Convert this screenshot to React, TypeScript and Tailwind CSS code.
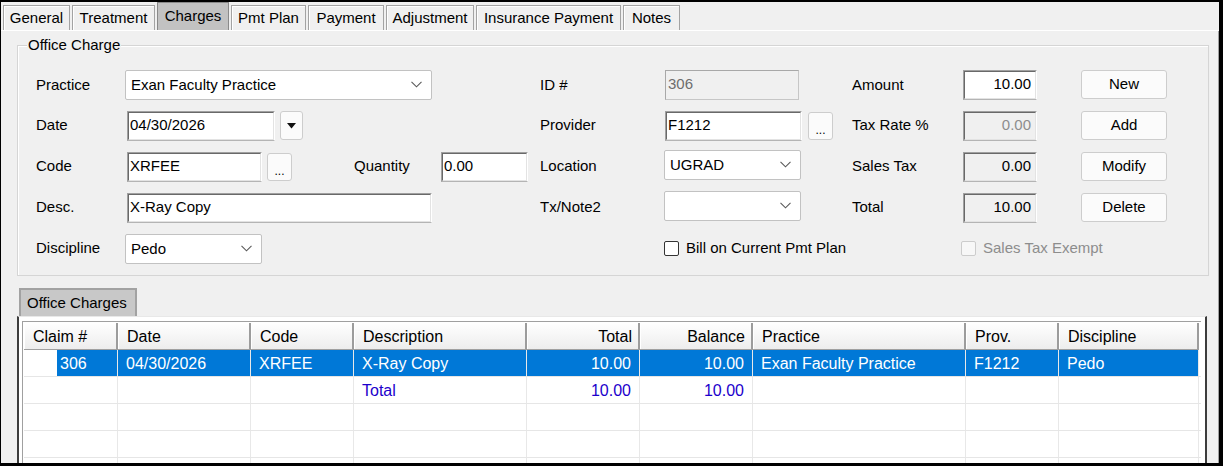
import React from "react";

function Chevron() {
  return (
    <svg width="11" height="7" viewBox="0 0 11 7" className="shrink-0">
      <polyline points="0.5,0.8 5.5,5.8 10.5,0.8" fill="none" stroke="#5a5a5a" strokeWidth="1.1" />
    </svg>
  );
}

function Combo({ w, text }: { w: string; text: string }) {
  return (
    <div className={`${w} h-[30px] bg-white border border-[#c2c2c2] rounded-[2px] flex items-center justify-between pl-[5px] pr-[9px]`}>
      <span className="text-[15px] text-black leading-none">{text}</span>
      <Chevron />
    </div>
  );
}

function Sunken({
  w,
  bg,
  right,
  gray,
  text,
}: {
  w: string;
  bg?: boolean;
  right?: boolean;
  gray?: boolean;
  text: string;
}) {
  return (
    <div className={`${w} h-[30px] border border-t-[#a0a0a0] border-l-[#a0a0a0] border-r-white border-b-[#b4b4b4]`}>
      <div
        className={`h-full w-full border border-t-[#696969] border-l-[#696969] border-r-[#e3e3e3] border-b-[#e3e3e3] flex items-start pt-[2px] ${
          bg ? "bg-[#f0f0f0]" : "bg-white"
        } ${right ? "justify-end pr-[4px]" : "justify-start pl-[1px]"}`}
      >
        <span className={`text-[15px] leading-[20px] ${gray ? "text-[#8d8d8d]" : "text-black"}`}>{text}</span>
      </div>
    </div>
  );
}

function Btn({ w, h, children }: { w: string; h: string; children: React.ReactNode }) {
  return (
    <div className={`${w} ${h} bg-[#fbfbfb] border border-[#cdcdcd] rounded-[3px] flex items-center justify-center text-[15px] text-black`}>
      {children}
    </div>
  );
}

function Dots() {
  return (
    <Btn w="w-[25px]" h="h-[28px]">
      <span className="text-[12px] leading-none pt-[8px] tracking-[0px]">...</span>
    </Btn>
  );
}

function Check({ disabled, label }: { disabled?: boolean; label: string }) {
  return (
    <div className="flex items-center">
      <div
        className={`w-[15px] h-[15px] rounded-[2px] border ${
          disabled ? "border-[#cccccc] bg-[#f7f7f7]" : "border-[#333333] bg-white"
        }`}
      />
      <span className={`ml-[7px] text-[15px] ${disabled ? "text-[#8d8d8d]" : "text-black"}`}>{label}</span>
    </div>
  );
}

const tabs = [
  { t: "General", w: "w-[67px]" },
  { t: "Treatment", w: "w-[83px]" },
  { t: "Charges", w: "w-[72px]", sel: true },
  { t: "Pmt Plan", w: "w-[75px]" },
  { t: "Payment", w: "w-[76px]" },
  { t: "Adjustment", w: "w-[88px]" },
  { t: "Insurance Payment", w: "w-[145px]" },
  { t: "Notes", w: "w-[57px]" },
];

const cols = [
  { h: "Claim #", w: "w-[94px]" },
  { h: "Date", w: "w-[133px]" },
  { h: "Code", w: "w-[103px]" },
  { h: "Description", w: "w-[173px]" },
  { h: "Total", w: "w-[113px]", r: true },
  { h: "Balance", w: "w-[113px]", r: true },
  { h: "Practice", w: "w-[213px]" },
  { h: "Prov.", w: "w-[93px]" },
  { h: "Discipline", w: "w-[140px]" },
];

const selRow = ["306", "04/30/2026", "XRFEE", "X-Ray Copy", "10.00", "10.00", "Exan Faculty Practice", "F1212", "Pedo"];
const totRow = ["", "", "", "Total", "10.00", "10.00", "", "", ""];

export default function App() {
  return (
    <div className="w-[1223px] h-[466px] bg-black pt-[2px] pl-[1px] pr-[4px] pb-[3px] font-['Liberation_Sans',Arial,sans-serif] overflow-hidden">
      <div className="w-full h-full bg-[#f0f0f0] flex flex-col overflow-hidden">
        {/* tab strip */}
        <div className="h-[28px] flex items-end gap-[2px] pl-[2px] shrink-0">
          {tabs.map((tb) =>
            tb.sel ? (
              <div
                key={tb.t}
                className={`${tb.w} h-[28px] bg-[#c2c2c2] border border-b-0 border-[#8a8a8a] flex items-center justify-center text-[15px] text-black pb-[1px]`}
              >
                {tb.t}
              </div>
            ) : (
              <div
                key={tb.t}
                className={`${tb.w} h-[25px] bg-[#f0f0f0] border border-b-0 border-[#a3a3a3] shadow-[inset_1px_1px_0_#ffffff] flex items-center justify-center text-[15px] text-black`}
              >
                {tb.t}
              </div>
            )
          )}
        </div>
        <div className="h-[1px] bg-white shrink-0" />
        {/* page */}
        <div className="flex-1 flex flex-col border-r border-r-[#a0a0a0]">
          {/* group box */}
          <div className="relative ml-[16px] mt-[14px] w-[1192px] h-[231px] border border-[#d5d5d5] shadow-[inset_1px_1px_0_#ffffff] flex pt-[18px] pl-[18px] shrink-0">
            <div className="absolute -top-[10px] left-[9px] px-[1px] bg-[#f0f0f0] text-[15px] leading-[18px] text-black">
              Office Charge
            </div>
            {/* left column */}
            <div className="w-[504px] flex flex-col">
              <div className="h-[41px] flex items-center">
                <span className="w-[89px] text-[15px] pt-[1px]">Practice</span>
                <Combo w="w-[307px]" text="Exan Faculty Practice" />
              </div>
              <div className="h-[41px] flex items-center">
                <span className="w-[91px] text-[15px]">Date</span>
                <Sunken w="w-[148px]" text="04/30/2026" />
                <div className="ml-[5px]">
                  <Btn w="w-[23px]" h="h-[29px]">
                    <svg width="9" height="6" viewBox="0 0 9 6">
                      <polygon points="0,0 9,0 4.5,5.5" fill="#111" />
                    </svg>
                  </Btn>
                </div>
              </div>
              <div className="h-[41px] flex items-center">
                <span className="w-[91px] text-[15px]">Code</span>
                <Sunken w="w-[135px]" text="XRFEE" />
                <div className="ml-[5px]">
                  <Dots />
                </div>
                <span className="ml-[62px] w-[87px] text-[15px]">Quantity</span>
                <Sunken w="w-[87px]" text="0.00" />
              </div>
              <div className="h-[41px] flex items-center">
                <span className="w-[91px] text-[15px]">Desc.</span>
                <Sunken w="w-[305px]" text="X-Ray Copy" />
              </div>
              <div className="h-[41px] flex items-center">
                <span className="w-[89px] text-[15px]">Discipline</span>
                <Combo w="w-[137px]" text="Pedo" />
              </div>
            </div>
            {/* middle column */}
            <div className="w-[312px] flex flex-col">
              <div className="h-[41px] flex items-center">
                <span className="w-[125px] text-[15px] pt-[1px]">ID #</span>
                <div className="w-[134px] h-[30px] bg-[#f0f0f0] border border-[#c6c6c6] border-t-[#a8a8a8] border-l-[#a8a8a8] flex items-start pt-[3px] pl-[2px]">
                  <span className="text-[15px] leading-[20px] text-[#6d6d6d]">306</span>
                </div>
              </div>
              <div className="h-[41px] flex items-center">
                <span className="w-[125px] text-[15px]">Provider</span>
                <Sunken w="w-[137px]" text="F1212" />
                <div className="ml-[6px]">
                  <Dots />
                </div>
              </div>
              <div className="h-[41px] flex items-center pb-[4px]">
                <span className="w-[124px] text-[15px] pt-[4px]">Location</span>
                <Combo w="w-[137px]" text="UGRAD" />
              </div>
              <div className="h-[41px] flex items-center pb-[4px]">
                <span className="w-[124px] text-[15px] pt-[4px]">Tx/Note2</span>
                <Combo w="w-[137px]" text="" />
              </div>
              <div className="h-[41px] flex items-center pl-[124px]">
                <Check label="Bill on Current Pmt Plan" />
              </div>
            </div>
            {/* right column */}
            <div className="flex-1 flex flex-col">
              <div className="h-[41px] flex items-center">
                <span className="w-[111px] text-[15px] pt-[1px]">Amount</span>
                <Sunken w="w-[74px]" right text="10.00" />
                <div className="ml-[44px]">
                  <Btn w="w-[86px]" h="h-[29px]">New</Btn>
                </div>
              </div>
              <div className="h-[41px] flex items-center">
                <span className="w-[111px] text-[15px]">Tax Rate %</span>
                <Sunken w="w-[74px]" bg right gray text="0.00" />
                <div className="ml-[44px]">
                  <Btn w="w-[86px]" h="h-[29px]">Add</Btn>
                </div>
              </div>
              <div className="h-[41px] flex items-center">
                <span className="w-[111px] text-[15px]">Sales Tax</span>
                <Sunken w="w-[74px]" bg right text="0.00" />
                <div className="ml-[44px]">
                  <Btn w="w-[86px]" h="h-[29px]">Modify</Btn>
                </div>
              </div>
              <div className="h-[41px] flex items-center">
                <span className="w-[111px] text-[15px]">Total</span>
                <Sunken w="w-[74px]" bg right text="10.00" />
                <div className="ml-[44px]">
                  <Btn w="w-[86px]" h="h-[29px]">Delete</Btn>
                </div>
              </div>
              <div className="h-[41px] flex items-center pl-[109px]">
                <Check disabled label="Sales Tax Exempt" />
              </div>
            </div>
          </div>

          {/* Office Charges sub tab */}
          <div className="ml-[18px] mt-[12px] w-[118px] h-[28px] bg-[#c8c8c8] border-2 border-b-0 border-[#a2a2a2] flex items-center pl-[6px] pt-[1px] text-[15px] text-black shrink-0">
            Office Charges
          </div>
          {/* grid panel */}
          <div className="ml-[16px] w-[1190px] flex-1 border-l-2 border-r-2 border-[#3c3c3c] border-t border-t-[#e8e8e8] bg-white pt-[4px] pl-[3px] pr-[4px]">
            <div className="h-full border-l border-t border-[#a0a0a0] bg-white text-[16px] pl-[1px] pt-[1px]">
              {/* header */}
              <div className="flex h-[27px]">
                {cols.map((c) => (
                  <div
                    key={c.h}
                    className={`${c.w} h-full bg-gradient-to-b from-white to-[#ededed] border-r-2 border-r-[#9c9c9c] border-b border-b-[#a0a0a0] shadow-[inset_1px_1px_0_#ffffff] flex items-center pt-[1px] ${
                      c.r ? "justify-end pr-[6px]" : "pl-[9px]"
                    } text-black`}
                  >
                    {c.h}
                  </div>
                ))}
              </div>
              {/* selected row */}
              <div className="flex h-[27px] border-b border-[#e6e6e6]">
                {cols.map((c, i) =>
                  i === 0 ? (
                    <div key={c.h} className={`${c.w} h-full flex border-r border-[#e8e8e8]`}>
                      <div className="w-[33px] bg-white" />
                      <div className="flex-1 bg-[#0078d7] text-white flex items-center pl-[3px] pt-[1px]">{selRow[i]}</div>
                    </div>
                  ) : (
                    <div
                      key={c.h}
                      className={`${c.w} h-full bg-[#0078d7] text-white border-r border-[#e8e8e8] flex items-center pt-[1px] ${
                        c.r ? "justify-end pr-[8px]" : "pl-[8px]"
                      }`}
                    >
                      {selRow[i]}
                    </div>
                  )
                )}
              </div>
              {/* total row */}
              <div className="flex h-[27px] border-b border-[#e6e6e6]">
                {cols.map((c, i) => (
                  <div
                    key={c.h}
                    className={`${c.w} h-full border-r border-[#e8e8e8] flex items-center pt-[1px] text-[#1c00cc] ${
                      c.r ? "justify-end pr-[8px]" : "pl-[8px]"
                    }`}
                  >
                    {totRow[i]}
                  </div>
                ))}
              </div>
              {[0, 1, 2].map((k) => (
                <div key={k} className="flex h-[27px] border-b border-[#e6e6e6]">
                  {cols.map((c) => (
                    <div key={c.h} className={`${c.w} h-full border-r border-[#e8e8e8]`} />
                  ))}
                </div>
              ))}
            </div>
          </div>
        </div>
      </div>
    </div>
  );
}
